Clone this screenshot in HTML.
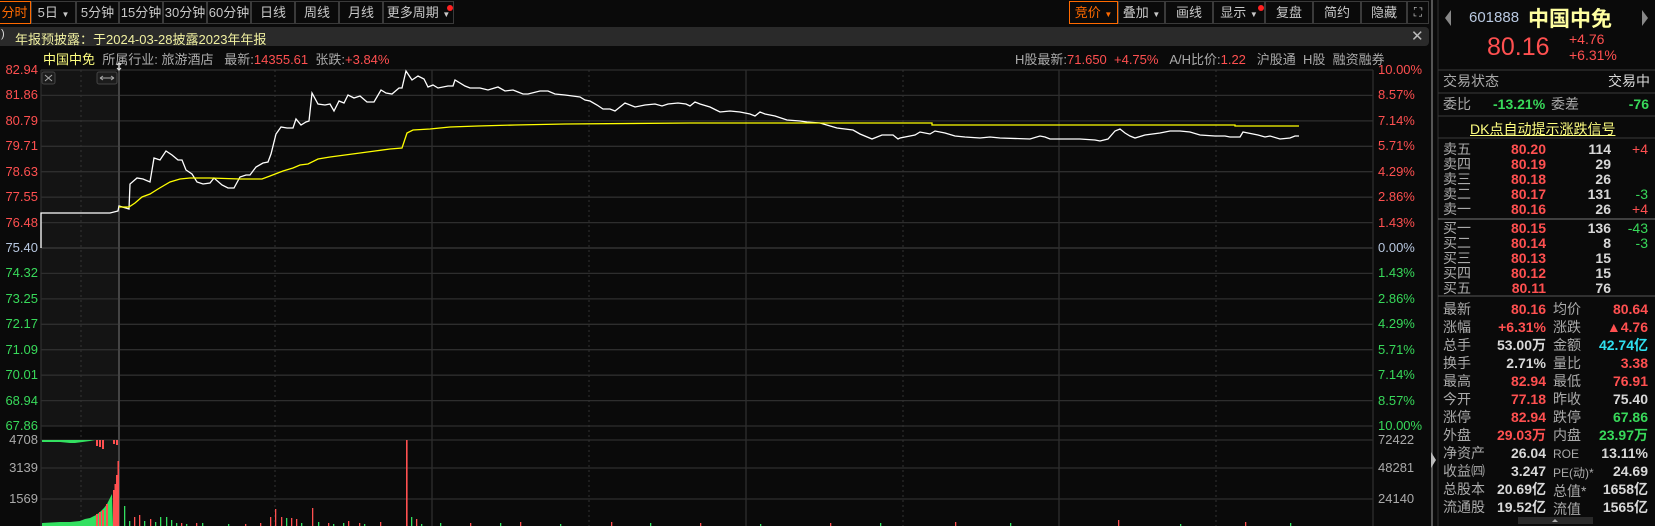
<!DOCTYPE html>
<html><head><meta charset="utf-8"><style>
*{margin:0;padding:0;box-sizing:border-box}
body{width:1655px;height:526px;background:#0a0a0a;overflow:hidden;position:relative;font-family:"Liberation Sans","Noto Sans CJK SC",sans-serif;color:#c8c8c8}
.a{position:absolute;white-space:nowrap}
.tb{position:absolute;top:1px;height:23px;border:1px solid #3a3a3a;font-size:13px;color:#c8c8c8;text-align:center;line-height:21px}
.or{border-color:#ff6a00;color:#ff6a00}
.r{color:#ff5050}.g{color:#38d95a}.w{color:#d8d8d8}.gy{color:#aaa}.y{color:#ffff80}.c{color:#2fe0f0}
.ll{position:absolute;left:0;width:38px;text-align:right;font-size:13px;line-height:14px}
.rl{position:absolute;left:1378px;font-size:13px;line-height:14px}
.p{position:absolute;font-size:14px;line-height:15px;white-space:nowrap}
.b{font-weight:bold}
</style></head><body>
<div class="tb or" style="left:-2px;width:33px">分时</div>
<div class="tb" style="left:31px;width:45px">5日 <span style="font-size:8px">▼</span></div>
<div class="tb" style="left:76px;width:43px">5分钟</div>
<div class="tb" style="left:119px;width:44px">15分钟</div>
<div class="tb" style="left:163px;width:44px">30分钟</div>
<div class="tb" style="left:207px;width:44px">60分钟</div>
<div class="tb" style="left:251px;width:44px">日线</div>
<div class="tb" style="left:295px;width:44px">周线</div>
<div class="tb" style="left:339px;width:44px">月线</div>
<div class="tb" style="left:383px;width:71px">更多周期 <span style="font-size:8px">▼</span></div>
<div class="a" style="left:447px;top:5px;width:6px;height:6px;border-radius:3px;background:#ff2020"></div>
<div class="tb or" style="left:1069px;width:49px">竞价 <span style="font-size:8px">▼</span></div>
<div class="tb" style="left:1118px;width:47px">叠加 <span style="font-size:8px">▼</span></div>
<div class="tb" style="left:1165px;width:48px">画线</div>
<div class="tb" style="left:1213px;width:52px">显示 <span style="font-size:8px">▼</span></div>
<div class="a" style="left:1258px;top:5px;width:6px;height:6px;border-radius:3px;background:#ff2020"></div>
<div class="tb" style="left:1265px;width:48px">复盘</div>
<div class="tb" style="left:1313px;width:48px">简约</div>
<div class="tb" style="left:1361px;width:46px">隐藏 <span style="font-size:10px">▶▶</span></div>
<div class="tb" style="left:1407px;width:22px;font-size:12px">⛶</div>

<div class="a" style="left:0;top:27px;width:1429px;height:19px;background:#2a2a2a;border-radius:0 4px 4px 0"></div>
<div class="a" style="left:1px;top:28px;font-size:11px;color:#ddd">)</div>
<div class="a y" style="left:15px;top:29px;font-size:13px;color:#f0f0a0">年报预披露：于2024-03-28披露2023年年报</div>
<div class="a" style="left:1411px;top:27px;font-size:15px;color:#bbb">✕</div>

<div class="a" style="left:43px;top:49px;font-size:13px"><span class="y">中国中免</span>&nbsp; <span class="gy">所属行业: 旅游酒店&nbsp;&nbsp; 最新:</span><span class="r">14355.61</span>&nbsp;&nbsp;<span class="gy">张跌:</span><span class="r">+3.84%</span></div>
<div class="a" style="left:1015px;top:49px;font-size:13px"><span class="gy">H股最新:</span><span class="r">71.650&nbsp; +4.75%</span>&nbsp;&nbsp; <span class="gy">A/H比价:</span><span class="r">1.22</span>&nbsp;&nbsp; <span class="gy">沪股通&nbsp; H股&nbsp; 融资融券</span></div>

<svg class="a" style="left:0;top:0" width="1655" height="526">
<rect x="41" y="70" width="78" height="356" fill="#141414"/>
<rect x="41" y="440" width="78" height="86" fill="#141414"/>
<g stroke="#2e2e2e" stroke-width="1.3">
<line x1="41" y1="70" x2="1373" y2="70"/><line x1="41" y1="95.4" x2="1373" y2="95.4"/><line x1="41" y1="120.9" x2="1373" y2="120.9"/><line x1="41" y1="146.3" x2="1373" y2="146.3"/><line x1="41" y1="171.7" x2="1373" y2="171.7"/><line x1="41" y1="197.2" x2="1373" y2="197.2"/><line x1="41" y1="222.6" x2="1373" y2="222.6"/><line x1="41" y1="248" x2="1373" y2="248" stroke="#3a3a3a"/><line x1="41" y1="273.4" x2="1373" y2="273.4"/><line x1="41" y1="298.9" x2="1373" y2="298.9"/><line x1="41" y1="324.3" x2="1373" y2="324.3"/><line x1="41" y1="349.7" x2="1373" y2="349.7"/><line x1="41" y1="375.2" x2="1373" y2="375.2"/><line x1="41" y1="400.6" x2="1373" y2="400.6"/><line x1="41" y1="426" x2="1373" y2="426"/>
<line x1="41" y1="440" x2="1373" y2="440"/><line x1="41" y1="468" x2="1373" y2="468"/><line x1="41" y1="499" x2="1373" y2="499"/>
<line x1="41" y1="70" x2="41" y2="526"/><line x1="1373" y1="70" x2="1373" y2="526"/>
<line x1="432" y1="70" x2="432" y2="526"/><line x1="746" y1="70" x2="746" y2="526"/><line x1="1059" y1="70" x2="1059" y2="526"/>
</g>
<line x1="119" y1="62" x2="119" y2="526" stroke="#444" stroke-width="2"/>
<g stroke="#333" stroke-width="1" stroke-dasharray="2,3">
<line x1="81" y1="70" x2="81" y2="526"/><line x1="275" y1="70" x2="275" y2="526"/><line x1="589" y1="70" x2="589" y2="526"/><line x1="903" y1="70" x2="903" y2="526"/><line x1="1216" y1="70" x2="1216" y2="526"/>
</g>
<rect x="42" y="72" width="13" height="12" rx="2" fill="#1c1c1c" stroke="#444"/>
<path d="M45 75l7 6M52 75l-7 6" stroke="#aaa" stroke-width="1"/>
<rect x="97" y="72" width="20" height="12" rx="2" fill="#1c1c1c" stroke="#444"/>
<path d="M100 78h14M100 78l3-2M100 78l3 2M114 78l-3-2M114 78l-3 2" stroke="#aaa" stroke-width="1" fill="none"/>
<path d="M119 63v7M117 65l2-2 2 2M117 68l2 2 2-2" stroke="#ddd" stroke-width="1.2" fill="none"/>

<polyline fill="none" stroke="#ffffff" stroke-width="1.3" points="41,248 41,213 44,213 110,213 118,211 119,206 129,209 130,184 137,178 143,179 150,182 154,158 160,160 166,151 172,155 178,160 182,160 186,170 192,174 197,182 203,184 210,183 214,178 222,185 228,188 234,188 240,177 246,175 250,175 256,167 263,163 268,162 271,154 276,134 281,127 287,128 293,128 296,119 301,125 306,122 309,121 312,93 318,104 325,105 330,104 334,111 339,101 344,103 348,95 354,98 360,96 367,102 374,102 381,90 386,93 392,94 399,88 402,88 406,71 412,80 418,76 424,79 428,87 433,85 438,88 448,86 453,86 455,80 465,86 470,88 480,88 488,90 498,87 505,91 513,90 518,92 523,94 528,94 540,91 548,91 555,94 565,95 580,97 585,100 590,101 597,105 603,109 610,109 615,111 625,103 635,107 645,105 655,104 662,106 668,104 678,103 686,104 690,106 695,102 700,104 710,107 716,110 720,112 730,111 740,112 750,114 755,116 760,112 765,114 775,116 787,120 800,121 807,122 820,123 837,128 853,130 860,134 872,139 882,135 893,135 898,139 900,138 915,135 920,132 930,134 935,131 945,133 955,136 965,137 980,138 990,137 1000,138 1030,139 1040,136 1045,137 1050,139 1080,139 1095,140 1100,141 1108,139 1115,131 1120,129 1125,133 1130,136 1135,138 1145,135 1160,133 1170,131 1180,131 1190,132 1200,135 1215,136 1225,136 1230,137 1240,137 1243,132 1248,133 1258,135 1265,137 1270,136 1280,139 1290,138 1295,136 1299,136"/>
<polyline fill="none" stroke="#ffff00" stroke-width="1.3" points="119,207 129,207 135,203 142,197 150,194 158,189 170,182 180,179 190,178 210,178 240,179 262,179 270,176 283,171 293,168 300,165 308,164 318,159 330,157 345,155 360,153 375,151 390,149 402,148 407,133 413,130 430,129 450,127 478,126 515,125 565,124 690,123 932,123 932,125 1235,125 1235,126 1299,126"/>

<polygon fill="#33e060" points="42,526 42,523 60,522 70,522 80,521 85,519 90,518 96,515 100,512 104,508 107,504 112,494 113,526"/>
<polygon fill="#33e060" points="42,440 42,442 60,442 70,443 75,443 90,441 95,440"/>
<g fill="#ff5050">
<rect x="96" y="514" width="2" height="12"/><rect x="99" y="512" width="2" height="14"/><rect x="102" y="510" width="2" height="16"/><rect x="106" y="504" width="2" height="22"/>
<rect x="113" y="490" width="1.5" height="36"/><rect x="114.5" y="484" width="1.5" height="42"/><rect x="116" y="475" width="1.5" height="51"/><rect x="117.5" y="461" width="1.5" height="65"/>
<rect x="96" y="440" width="2" height="6"/><rect x="99" y="440" width="2" height="7"/><rect x="102" y="440" width="2" height="9"/><rect x="113" y="440" width="2" height="4"/><rect x="116" y="440" width="2" height="5"/>
<rect x="134" y="517" width="1.3" height="9"/><rect x="139" y="515" width="1.3" height="11"/><rect x="150" y="519" width="1.3" height="7"/><rect x="181" y="523" width="1.3" height="3"/><rect x="196" y="523" width="1.3" height="3"/><rect x="245" y="524" width="1.3" height="2"/><rect x="260" y="523" width="1.3" height="3"/>
<rect x="270" y="517" width="1.3" height="9"/><rect x="275" y="509" width="1.3" height="17"/><rect x="281" y="517" width="1.3" height="9"/><rect x="291" y="518" width="1.3" height="8"/><rect x="296" y="519" width="1.3" height="7"/><rect x="312" y="508" width="1.3" height="18"/><rect x="328" y="523" width="1.3" height="3"/><rect x="348" y="521" width="1.3" height="5"/><rect x="359" y="523" width="1.3" height="3"/><rect x="380" y="522" width="1.3" height="4"/>
<rect x="406" y="440" width="1.6" height="86"/><rect x="416" y="519" width="1.3" height="7"/><rect x="470" y="523" width="1.3" height="3"/><rect x="520" y="522" width="1.3" height="4"/><rect x="611" y="522" width="1.3" height="4"/><rect x="700" y="523" width="1.3" height="3"/><rect x="830" y="523" width="1.3" height="3"/><rect x="955" y="522" width="1.3" height="4"/><rect x="1118" y="520" width="1.3" height="6"/><rect x="1245" y="522" width="1.3" height="4"/>
</g>
<g fill="#33e060">
<rect x="124" y="506" width="1.3" height="20"/><rect x="129" y="521" width="1.3" height="5"/><rect x="144" y="521" width="1.3" height="5"/><rect x="155" y="522" width="1.3" height="4"/><rect x="160" y="517" width="1.3" height="9"/><rect x="166" y="517" width="1.3" height="9"/><rect x="171" y="520" width="1.3" height="6"/><rect x="176" y="523" width="1.3" height="3"/><rect x="186" y="524" width="1.3" height="2"/><rect x="202" y="523" width="1.3" height="3"/><rect x="228" y="524" width="1.3" height="2"/><rect x="286" y="518" width="1.3" height="8"/><rect x="301" y="523" width="1.3" height="3"/><rect x="318" y="522" width="1.3" height="4"/><rect x="333" y="524" width="1.3" height="2"/><rect x="343" y="523" width="1.3" height="3"/><rect x="364" y="524" width="1.3" height="2"/>
<rect x="411" y="517" width="1.3" height="9"/><rect x="421" y="524" width="1.3" height="2"/><rect x="440" y="523" width="1.3" height="3"/><rect x="500" y="523" width="1.3" height="3"/><rect x="560" y="524" width="1.3" height="2"/><rect x="650" y="523" width="1.3" height="3"/><rect x="760" y="524" width="1.3" height="2"/><rect x="880" y="523" width="1.3" height="3"/><rect x="1010" y="523" width="1.3" height="3"/><rect x="1180" y="524" width="1.3" height="2"/><rect x="1290" y="523" width="1.3" height="3"/>
</g>
<line x1="1432" y1="0" x2="1432" y2="526" stroke="#555" stroke-width="2"/>
<line x1="1438" y1="0" x2="1438" y2="526" stroke="#333" stroke-width="1"/>
<path d="M1431 452l5 8-5 8z" fill="#bbb"/>
<g stroke="#3a3a3a" stroke-width="1"><line x1="1438" y1="70" x2="1655" y2="70"/><line x1="1438" y1="93" x2="1655" y2="93"/><line x1="1438" y1="116" x2="1655" y2="116"/><line x1="1438" y1="138" x2="1655" y2="138"/></g>
<line x1="1438" y1="219" x2="1655" y2="219" stroke="#777"/>
<line x1="1438" y1="296" x2="1655" y2="296" stroke="#555"/>
<rect x="1518" y="517" width="75" height="7" fill="#2a2a2a"/>
<path d="M1552 522l3-3 3 3z" fill="#aaa"/>
<path d="M1451 10l-6 8 6 8z" fill="#888"/><path d="M1642 10l6 8-6 8z" fill="#888"/>
</svg>

<div class="ll r" style="top:63px">82.94</div><div class="ll r" style="top:88px">81.86</div><div class="ll r" style="top:114px">80.79</div><div class="ll r" style="top:139px">79.71</div><div class="ll r" style="top:165px">78.63</div><div class="ll r" style="top:190px">77.55</div><div class="ll r" style="top:216px">76.48</div><div class="ll" style="top:241px;color:#b8c8e0">75.40</div><div class="ll g" style="top:266px">74.32</div><div class="ll g" style="top:292px">73.25</div><div class="ll g" style="top:317px">72.17</div><div class="ll g" style="top:343px">71.09</div><div class="ll g" style="top:368px">70.01</div><div class="ll g" style="top:394px">68.94</div><div class="ll g" style="top:419px">67.86</div>
<div class="ll gy" style="top:433px">4708</div><div class="ll gy" style="top:461px">3139</div><div class="ll gy" style="top:492px">1569</div>
<div class="rl r" style="top:63px">10.00%</div><div class="rl r" style="top:88px">8.57%</div><div class="rl r" style="top:114px">7.14%</div><div class="rl r" style="top:139px">5.71%</div><div class="rl r" style="top:165px">4.29%</div><div class="rl r" style="top:190px">2.86%</div><div class="rl r" style="top:216px">1.43%</div><div class="rl" style="top:241px;color:#b8c8e0">0.00%</div><div class="rl g" style="top:266px">1.43%</div><div class="rl g" style="top:292px">2.86%</div><div class="rl g" style="top:317px">4.29%</div><div class="rl g" style="top:343px">5.71%</div><div class="rl g" style="top:368px">7.14%</div><div class="rl g" style="top:394px">8.57%</div><div class="rl g" style="top:419px">10.00%</div>
<div class="rl gy" style="top:433px">72422</div><div class="rl gy" style="top:461px">48281</div><div class="rl gy" style="top:492px">24140</div>

<div class="a" style="left:1469px;top:9px;font-size:15px;color:#b8c8e0">601888</div>
<div class="a" style="left:1528px;top:3px;font-size:21px;color:#ffffa0;font-weight:bold">中国中免</div>
<div class="a r" style="left:1487px;top:33px;font-size:25px">80.16</div>
<div class="a r" style="left:1569px;top:31px;font-size:14px;line-height:16px">+4.76<br>+6.31%</div>
<div class="p gy" style="left:1443px;top:74px">交易状态</div><div class="p w" style="right:5px;top:74px">交易中</div>
<div class="p gy" style="left:1443px;top:97px">委比</div><div class="p g b" style="left:1493px;top:97px">-13.21%</div><div class="p gy" style="left:1551px;top:97px">委差</div><div class="p g b" style="right:6px;top:97px">-76</div>
<div class="a" style="left:1470px;top:119px;font-size:14px;color:#ffff80;text-decoration:underline">DK点自动提示涨跌信号</div>

<div class="p gy" style="left:1443px;top:142px;line-height:15px">卖五<br>卖四<br>卖三<br>卖二<br>卖一</div>
<div class="p r b" style="right:109px;top:142px;text-align:right;line-height:15px">80.20<br>80.19<br>80.18<br>80.17<br>80.16</div>
<div class="p w b" style="right:44px;top:142px;text-align:right;line-height:15px">114<br>29<br>26<br>131<br>26</div>
<div class="p" style="right:7px;top:142px;text-align:right;line-height:15px"><span class="r">+4</span><br>&nbsp;<br>&nbsp;<br><span class="g">-3</span><br><span class="r">+4</span></div>
<div class="p gy" style="left:1443px;top:221px;line-height:15px">买一<br>买二<br>买三<br>买四<br>买五</div>
<div class="p r b" style="right:109px;top:221px;text-align:right;line-height:15px">80.15<br>80.14<br>80.13<br>80.12<br>80.11</div>
<div class="p w b" style="right:44px;top:221px;text-align:right;line-height:15px">136<br>8<br>15<br>15<br>76</div>
<div class="p g" style="right:7px;top:221px;text-align:right;line-height:15px">-43<br>-3</div>

<div class="p gy" style="left:1443px;top:300px;line-height:18px">最新<br>涨幅<br>总手<br>换手<br>最高<br>今开<br>涨停<br>外盘<br>净资产<br>收益㈣<br>总股本<br>流通股</div>
<div class="p b" style="right:109px;top:300px;text-align:right;line-height:18px"><span class="r">80.16</span><br><span class="r">+6.31%</span><br><span class="w">53.00万</span><br><span class="w">2.71%</span><br><span class="r">82.94</span><br><span class="r">77.18</span><br><span class="r">82.94</span><br><span class="r">29.03万</span><br><span class="w">26.04</span><br><span class="w">3.247</span><br><span class="w">20.69亿</span><br><span class="w">19.52亿</span></div>
<div class="p gy" style="left:1553px;top:300px;line-height:18px">均价<br>涨跌<br>金额<br>量比<br>最低<br>昨收<br>跌停<br>内盘<br><span style="font-size:12px">ROE</span><br><span style="font-size:12px">PE(动)*</span><br>总值*<br>流值</div>
<div class="p b" style="right:7px;top:300px;text-align:right;line-height:18px"><span class="r">80.64</span><br><span class="r">▲4.76</span><br><span class="c">42.74亿</span><br><span class="r">3.38</span><br><span class="r">76.91</span><br><span class="w">75.40</span><br><span class="g">67.86</span><br><span class="g">23.97万</span><br><span class="w">13.11%</span><br><span class="w">24.69</span><br><span class="w">1658亿</span><br><span class="w">1565亿</span></div>
</body></html>
